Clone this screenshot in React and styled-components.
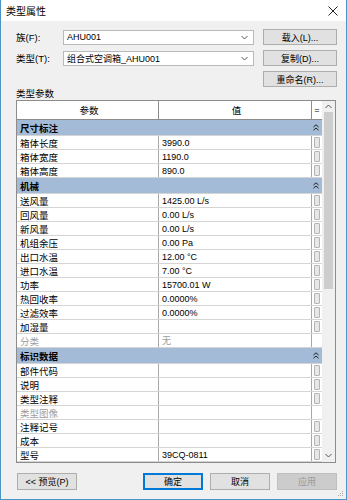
import styled, { createGlobalStyle } from "styled-components";

const GlobalStyle = createGlobalStyle`
  html, body {
    margin: 0;
    padding: 0;
    background: #ffffff;
  }
  body {
    font-family: "Liberation Sans", "Noto Sans CJK SC", sans-serif;
    font-size: 9.5px;
    color: #000;
  }
`;

const Window = styled.div`
  position: relative;
  width: 347px;
  height: 500px;
  box-sizing: border-box;
  border: 1px solid #4a95c6;
  border-top: none;
  background: #f0f0f0;
  display: flex;
  flex-direction: column;
`;

const TitleBar = styled.div`
  height: 21px;
  background: #ffffff;
  display: flex;
  align-items: center;
  justify-content: space-between;
  padding: 0 8px 0 5px;
  font-size: 10px;
`;

const Body = styled.div`
  display: flex;
  flex-direction: column;
  padding: 8px 9px 0 14px;
`;

const FormGrid = styled.div`
  display: grid;
  grid-template-columns: 39px 191px 74px;
  grid-auto-rows: 16px;
  column-gap: 9px;
  row-gap: 5px;
  align-items: center;
`;

const Label = styled.div`
  white-space: nowrap;
  padding-left: 1px;
`;

const Select = styled.div`
  height: 15px;
  box-sizing: border-box;
  background: #ffffff;
  border: 1px solid #b9b9b9;
  display: flex;
  align-items: center;
  justify-content: space-between;
  padding: 0 5px 0 3px;
  font-size: 9px;
`;

const Button = styled.div`
  grid-column: ${(p) => p.$col || "auto"};
  height: ${(p) => p.$h || 16}px;
  width: ${(p) => p.$w || "auto"};
  box-sizing: border-box;
  background: ${(p) => (p.$disabled ? "#cccccc" : "#e1e1e1")};
  border: ${(p) => (p.$primary ? "2px solid #0078d7" : p.$disabled ? "1px solid #bfbfbf" : "1px solid #adadad")};
  color: ${(p) => (p.$disabled ? "#9a9a9a" : "#000")};
  display: flex;
  align-items: center;
  justify-content: center;
  white-space: nowrap;
  font-size: 9px;
`;

const SectionLabel = styled.div`
  line-height: 12px;
  margin-top: 1px;
  padding-left: 1px;
`;

const TableFrame = styled.div`
  margin: 0 1px 0 1px;
  height: 363px;
  box-sizing: border-box;
  border: 1px solid #8c8c8c;
  background: #ffffff;
  display: flex;
`;

const Grid = styled.div`
  flex: 1;
  display: flex;
  flex-direction: column;
`;

const Row = styled.div`
  display: grid;
  grid-template-columns: 142px 153px 1fr;
  height: ${(p) => p.$h || 14}px;
  box-sizing: border-box;
  border-bottom: 1px solid ${(p) => (p.$head ? "#8c8c8c" : "#d4d4d4")};
  color: ${(p) => (p.$disabled ? "#9d9d9d" : "#000")};
`;

const Cell = styled.div`
  border-right: 1px solid ${(p) => (p.$head ? "#8c8c8c" : "#a8a8a8")};
  padding-left: 3px;
  display: flex;
  align-items: center;
  justify-content: ${(p) => (p.$center ? "center" : "flex-start")};
  white-space: nowrap;
  overflow: hidden;
  font-size: ${(p) => (p.$latin ? "9px" : "9.5px")};
`;

const EndCell = styled.div`
  display: flex;
  align-items: center;
  justify-content: center;
  font-size: 9px;
`;

const MiniBox = styled.div`
  width: 6px;
  height: 11px;
  box-sizing: border-box;
  border: 1px solid #b4b4b4;
  border-radius: 1px;
  background: #e7e7e7;
`;

const GroupRow = styled.div`
  height: 16px;
  box-sizing: border-box;
  background: #a3bbd6;
  border-bottom: 1px solid #d4d4d4;
  display: flex;
  align-items: center;
  justify-content: space-between;
  padding: 0 3px 0 3px;
  font-weight: bold;
`;

const Scrollbar = styled.div`
  width: 13px;
  background: #f0f0f0;
  display: flex;
  flex-direction: column;
  align-items: center;
`;

const Arrow = styled.div`
  height: ${(p) => p.$h}px;
  width: 100%;
  display: flex;
  align-items: center;
  justify-content: center;
`;

const Thumb = styled.div`
  width: 9px;
  height: 177px;
  background: #cdcdcd;
`;

const Track = styled.div`
  flex: 1;
`;

const Footer = styled.div`
  margin-top: 10px;
  padding-left: 2px;
  display: flex;
  justify-content: space-between;
`;

const ButtonGroup = styled.div`
  display: flex;
  gap: 7px;
`;

const Grip = styled.svg`
  position: absolute;
  right: 2px;
  bottom: 2px;
`;

const Chevron = ({ up }) => (
  <svg width="7" height="5" viewBox="0 0 7 5">
    <path
      d={up ? "M0.5 4L3.5 1L6.5 4" : "M0.5 1L3.5 4L6.5 1"}
      fill="none"
      stroke="#555"
      strokeWidth="1"
    />
  </svg>
);

const DoubleUp = () => (
  <svg width="6" height="7" viewBox="0 0 6 7">
    <path d="M0.5 3L3 0.8L5.5 3M0.5 6.2L3 4L5.5 6.2" fill="none" stroke="#222" strokeWidth="1" />
  </svg>
);

const groups = [
  {
    title: "尺寸标注",
    rows: [
      ["箱体长度", "3990.0"],
      ["箱体宽度", "1190.0"],
      ["箱体高度", "890.0"],
    ],
  },
  {
    title: "机械",
    rows: [
      ["送风量", "1425.00 L/s"],
      ["回风量", "0.00 L/s"],
      ["新风量", "0.00 L/s"],
      ["机组余压", "0.00 Pa"],
      ["出口水温", "12.00 °C"],
      ["进口水温", "7.00 °C"],
      ["功率", "15700.01 W"],
      ["热回收率", "0.0000%"],
      ["过滤效率", "0.0000%"],
      ["加湿量", ""],
      ["分类", "无", true],
    ],
  },
  {
    title: "标识数据",
    rows: [
      ["部件代码", ""],
      ["说明", ""],
      ["类型注释", ""],
      ["类型图像", "", true],
      ["注释记号", ""],
      ["成本", ""],
      ["型号", "39CQ-0811"],
    ],
  },
];

export default function App() {
  return (
    <>
      <GlobalStyle />
      <Window>
        <TitleBar>
          <span>类型属性</span>
          <svg width="10" height="10" viewBox="0 0 10 10">
            <path d="M0.5 0.5L9.5 9.5M9.5 0.5L0.5 9.5" stroke="#222" strokeWidth="1" />
          </svg>
        </TitleBar>
        <Body>
          <FormGrid>
            <Label>族(F):</Label>
            <Select>
              <span>AHU001</span>
              <Chevron />
            </Select>
            <Button>载入(L)...</Button>
            <Label>类型(T):</Label>
            <Select>
              <span>组合式空调箱_AHU001</span>
              <Chevron />
            </Select>
            <Button>复制(D)...</Button>
            <Button $col="3">重命名(R)...</Button>
          </FormGrid>
          <SectionLabel>类型参数</SectionLabel>
          <TableFrame>
            <Grid>
              <Row $h={19} $head>
                <Cell $head $center>参数</Cell>
                <Cell $head $center>值</Cell>
                <EndCell>=</EndCell>
              </Row>
              {groups.map((g) => (
                <div key={g.title}>
                  <GroupRow>
                    <span>{g.title}</span>
                    <DoubleUp />
                  </GroupRow>
                  {g.rows.map(([name, value, disabled]) => (
                    <Row key={name} $disabled={disabled}>
                      <Cell>{name}</Cell>
                      <Cell $latin>{value}</Cell>
                      <EndCell>{!disabled && <MiniBox />}</EndCell>
                    </Row>
                  ))}
                </div>
              ))}
            </Grid>
            <Scrollbar>
              <Arrow $h={11}>
                <Chevron up />
              </Arrow>
              <Thumb />
              <Track />
              <Arrow $h={14}>
                <Chevron />
              </Arrow>
            </Scrollbar>
          </TableFrame>
          <Footer>
            <Button $w="60px" $h={17}>&lt;&lt; 预览(P)</Button>
            <ButtonGroup>
              <Button $w="60px" $h={17} $primary>确定</Button>
              <Button $w="60px" $h={17}>取消</Button>
              <Button $w="60px" $h={17} $disabled>应用</Button>
            </ButtonGroup>
          </Footer>
        </Body>
        <Grip width="7" height="7" viewBox="0 0 7 7">
          <rect x="5" y="1" width="1" height="1" fill="#aaa" />
          <rect x="3" y="3" width="1" height="1" fill="#aaa" />
          <rect x="5" y="3" width="1" height="1" fill="#aaa" />
          <rect x="1" y="5" width="1" height="1" fill="#aaa" />
          <rect x="3" y="5" width="1" height="1" fill="#aaa" />
          <rect x="5" y="5" width="1" height="1" fill="#aaa" />
        </Grip>
      </Window>
    </>
  );
}
